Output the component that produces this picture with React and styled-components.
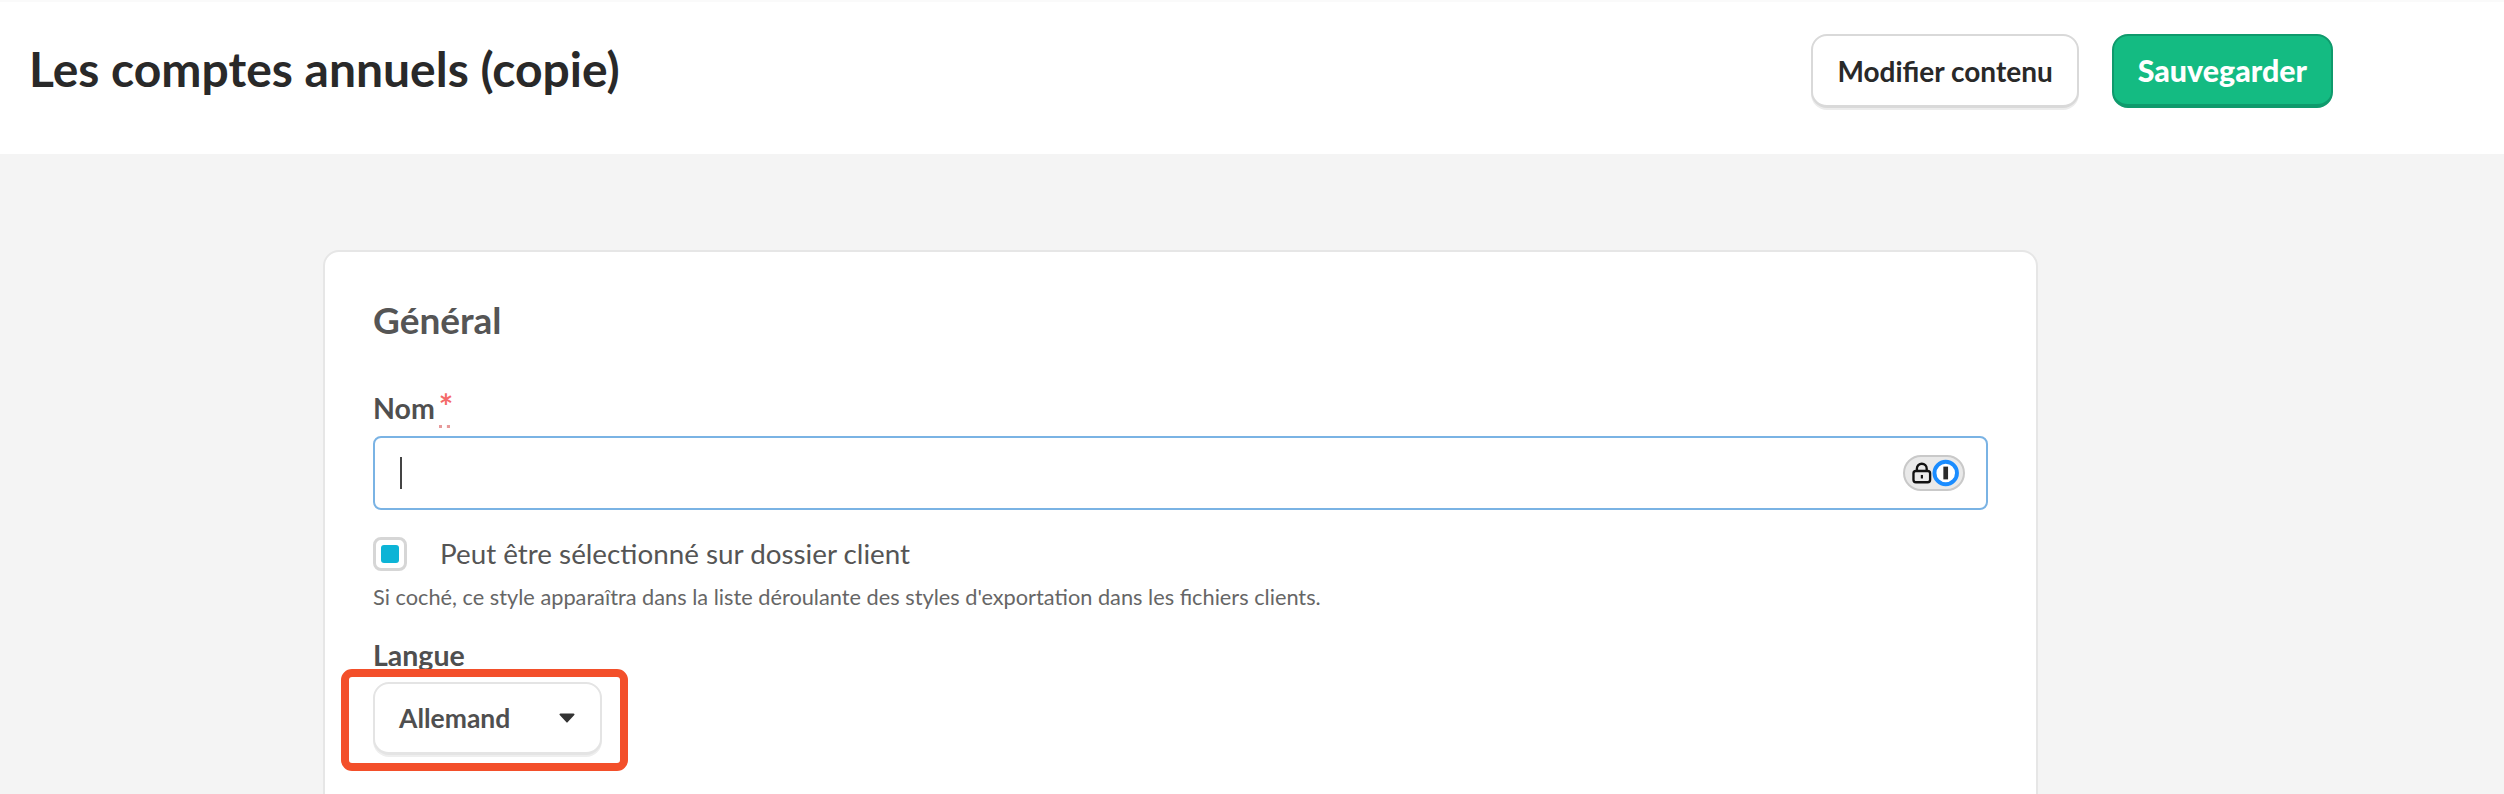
import React from "react";
import styled, { createGlobalStyle } from "styled-components";

const Global = createGlobalStyle`
  html, body { margin: 0; padding: 0; height: 100%; overflow: hidden; background: #f4f4f4; }
  * { box-sizing: border-box; }
  body { font-family: Lato, "Liberation Sans", sans-serif; }
`;

const Page = styled.div`
  height: 794px;
  overflow: hidden;
  display: flex;
  flex-direction: column;
  background: #f4f4f4;
`;

const Header = styled.header`
  height: 154px;
  flex: none;
  background: #fff;
  border-top: 2px solid #fafafa;
  padding: 32px 171px 0 29px;
  display: flex;
  align-items: flex-start;
  justify-content: space-between;
`;

const Title = styled.h1`
  margin: 0;
  font-size: 48px;
  line-height: 69px;
  font-weight: 700;
  color: #292929;
`;

const Actions = styled.div`
  display: flex;
  gap: 33px;
`;

const Button = styled.button`
  height: 74px;
  padding: 0 24px;
  border-radius: 16px;
  font-family: inherit;
  font-size: ${(p) => (p.$primary ? 30.4 : 28)}px;
  font-weight: ${(p) => (p.$primary ? 900 : 700)};
  border: 2px solid ${(p) => (p.$primary ? "#0f9a6c" : "#d9d9d9")};
  border-bottom-width: ${(p) => (p.$primary ? 4 : 3)}px;
  background: ${(p) => (p.$primary ? "#14bb82" : "#fff")};
  color: ${(p) => (p.$primary ? "#fff" : "#292929")};
  box-shadow: ${(p) => (p.$primary ? "none" : "0 2px 0 #ececec")};
`;

const Card = styled.section`
  position: relative;
  width: 1715px;
  margin: 96px 0 0 323px;
  padding: 46px 48px 0;
  flex: none;
  height: 600px;
  background: #fff;
  border: 2px solid #e6e6e6;
  border-radius: 16px;
`;

const CardTitle = styled.h2`
  margin: 0 0 49px;
  font-size: 37px;
  line-height: 44px;
  font-weight: 700;
  color: #555;
`;

const Label = styled.label`
  display: block;
  font-size: 28.5px;
  line-height: 34px;
  font-weight: 700;
  color: #4f4f4f;
`;

const Required = styled.span`
  position: relative;
  margin-left: 4px;
  color: #f46a6a;
  font-size: 34px;
  line-height: 20px;
  font-weight: 700;
  &::after {
    content: "";
    position: absolute;
    left: 0;
    bottom: -2px;
    width: 11px;
    border-bottom: 3px dotted #e79a9a;
  }
`;

const InputBox = styled.div`
  position: relative;
  margin-top: 11px;
  height: 74px;
  width: 1615px;
  display: flex;
  align-items: center;
  padding-left: 25px;
  border: 2px solid #7ab3e4;
  border-radius: 8px;
  background: #fff;
`;

const Caret = styled.span`
  width: 2px;
  height: 32px;
  background: #444;
`;

const PasswordBadge = styled.div`
  position: absolute;
  right: 21px;
  top: 17px;
  width: 62px;
  height: 36px;
  border-radius: 18px;
  border: 2px solid #c9c9c9;
  background: #e9e9e9;
  display: flex;
  align-items: center;
  justify-content: space-between;
  padding: 0 4px 0 7px;
`;

const CheckRow = styled.div`
  display: flex;
  align-items: center;
  gap: 33px;
  margin-top: 27px;
`;

const CheckBox = styled.span`
  width: 34px;
  height: 34px;
  flex: none;
  border: 3px solid #d6d6d6;
  border-radius: 8px;
  background: #fff;
  display: flex;
  align-items: center;
  justify-content: center;
`;

const CheckFill = styled.span`
  width: 18px;
  height: 18px;
  border-radius: 3px;
  background: #0cb4d6;
`;

const CheckLabel = styled.span`
  font-size: 27.8px;
  line-height: 34px;
  color: #555;
`;

const Hint = styled.p`
  margin: 12px 0 0;
  font-size: 21.75px;
  line-height: 28px;
  color: #666;
`;

const LangLabel = styled(Label)`
  margin-top: 27px;
`;

const SelectWrap = styled.div`
  position: relative;
  margin-top: 10px;
  width: 229px;
`;

const Select = styled.div`
  height: 73px;
  padding: 0 25px 0 24px;
  display: flex;
  align-items: center;
  justify-content: space-between;
  border: 2px solid #e4e4e4;
  border-bottom-width: 3px;
  border-radius: 16px;
  background: #fff;
  box-shadow: 0 2px 0 #eeeeee;
  font-size: 26.5px;
  font-weight: 700;
  color: #4f4f4f;
`;

const Highlight = styled.div`
  position: absolute;
  left: -32px;
  top: -13px;
  width: 287px;
  height: 102px;
  border: 8px solid #f34f2a;
  border-radius: 11px;
  pointer-events: none;
`;

const LockIcon = () => (
  <svg width="20" height="22" viewBox="0 0 20 22">
    <path d="M5 9V6.5a5 5 0 0 1 10 0V9" fill="none" stroke="#111" strokeWidth="2.4" />
    <rect x="1.5" y="9" width="17" height="11.5" rx="2.5" fill="none" stroke="#111" strokeWidth="2.4" />
    <rect x="9" y="13" width="2.2" height="3.6" fill="#111" />
  </svg>
);

const OnePasswordIcon = () => (
  <svg width="28" height="28" viewBox="0 0 28 28">
    <circle cx="14" cy="14" r="11.5" fill="#fff" stroke="#1a8cff" strokeWidth="4" />
    <rect x="11.6" y="7.5" width="4.8" height="13" fill="#2b2b2b" />
  </svg>
);

const Caretdown = () => (
  <svg width="16" height="10" viewBox="0 0 16 10">
    <path d="M1.5 0.5h13a1 1 0 0 1 .8 1.6L8.8 9a1 1 0 0 1-1.6 0L.7 2.1A1 1 0 0 1 1.5.5z" fill="#333" />
  </svg>
);

export default function App() {
  return (
    <Page>
      <Global />
      <Header>
        <Title>Les comptes annuels (copie)</Title>
        <Actions>
          <Button>Modifier contenu</Button>
          <Button $primary>Sauvegarder</Button>
        </Actions>
      </Header>
      <Card>
        <CardTitle>Général</CardTitle>
        <Label>
          Nom<Required>*</Required>
        </Label>
        <InputBox>
          <Caret />
          <PasswordBadge>
            <LockIcon />
            <OnePasswordIcon />
          </PasswordBadge>
        </InputBox>
        <CheckRow>
          <CheckBox>
            <CheckFill />
          </CheckBox>
          <CheckLabel>Peut être sélectionné sur dossier client</CheckLabel>
        </CheckRow>
        <Hint>Si coché, ce style apparaîtra dans la liste déroulante des styles d'exportation dans les fichiers clients.</Hint>
        <LangLabel>Langue</LangLabel>
        <SelectWrap>
          <Select>
            Allemand
            <Caretdown />
          </Select>
          <Highlight />
        </SelectWrap>
      </Card>
    </Page>
  );
}
